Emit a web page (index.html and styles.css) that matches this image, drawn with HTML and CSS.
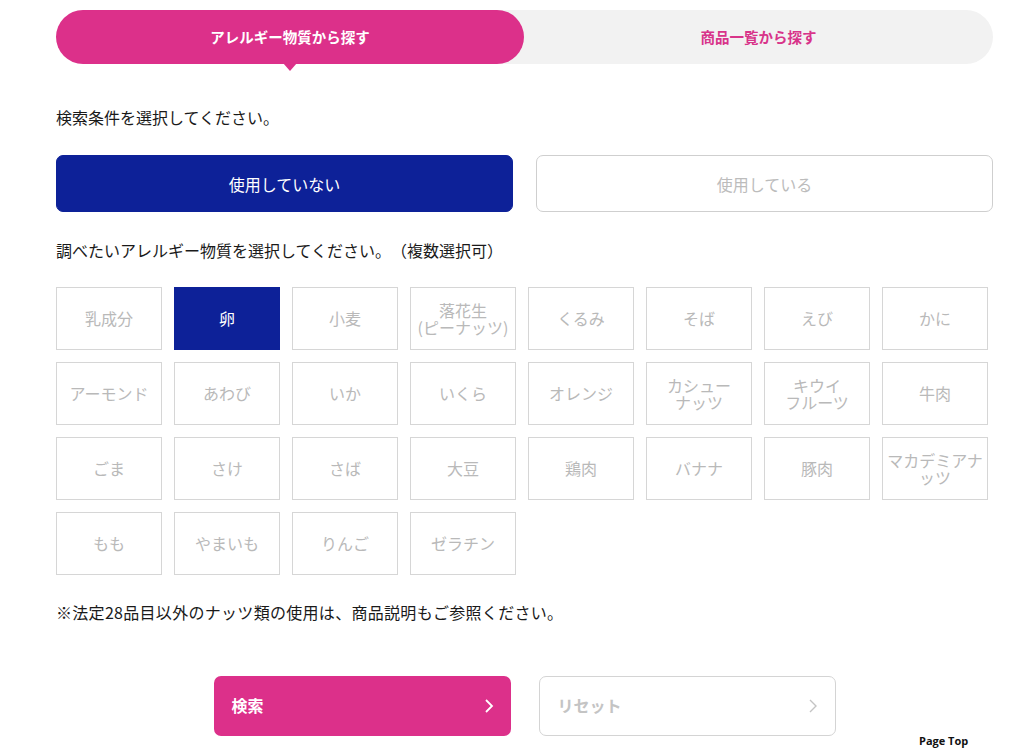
FILE: index.html
```html
<!DOCTYPE html>
<html lang="ja">
<head>
<meta charset="utf-8">
<link rel="stylesheet" href="styles.css">
</head>
<body>
<div class="page">
  <div class="tabs">
    <div class="tab tab-active">アレルギー物質から探す</div>
    <div class="tab tab-other">商品一覧から探す</div>
  </div>

  <p class="lead lead-first">検索条件を選択してください。</p>

  <div class="mode">
    <div class="mode-btn mode-on">使用していない</div>
    <div class="mode-btn mode-off">使用している</div>
  </div>

  <p class="lead lead-second">調べたいアレルギー物質を選択してください。（複数選択可）</p>

  <div class="grid">
    <div class="cell">乳成分</div>
    <div class="cell cell-on">卵</div>
    <div class="cell">小麦</div>
    <div class="cell">落花生<br>(ピーナッツ)</div>
    <div class="cell">くるみ</div>
    <div class="cell">そば</div>
    <div class="cell">えび</div>
    <div class="cell">かに</div>
    <div class="cell">アーモンド</div>
    <div class="cell">あわび</div>
    <div class="cell">いか</div>
    <div class="cell">いくら</div>
    <div class="cell">オレンジ</div>
    <div class="cell">カシュー<br>ナッツ</div>
    <div class="cell">キウイ<br>フルーツ</div>
    <div class="cell">牛肉</div>
    <div class="cell">ごま</div>
    <div class="cell">さけ</div>
    <div class="cell">さば</div>
    <div class="cell">大豆</div>
    <div class="cell">鶏肉</div>
    <div class="cell">バナナ</div>
    <div class="cell">豚肉</div>
    <div class="cell">マカデミアナッツ</div>
    <div class="cell">もも</div>
    <div class="cell">やまいも</div>
    <div class="cell">りんご</div>
    <div class="cell">ゼラチン</div>
  </div>

  <p class="note">※法定28品目以外のナッツ類の使用は、商品説明もご参照ください。</p>

  <div class="actions">
    <div class="act act-search"><span>検索</span>
      <svg class="chev" width="10" height="16" viewBox="0 0 10 16"><path d="M2 2l6 6-6 6" fill="none" stroke="currentColor" stroke-width="1.8"/></svg>
    </div>
    <div class="act act-reset"><span>リセット</span>
      <svg class="chev" width="10" height="16" viewBox="0 0 10 16"><path d="M2 2l6 6-6 6" fill="none" stroke="currentColor" stroke-width="1.4"/></svg>
    </div>
  </div>
</div>
<a class="pagetop">Page Top</a>
</body>
</html>
```

FILE: styles.css
```css
* { box-sizing: border-box; }
html, body { margin: 0; padding: 0; background: #fff; }
body {
  font-family: "Noto Sans CJK JP", "Noto Sans", sans-serif;
  color: #222;
  width: 1024px;
  height: 754px;
  overflow: hidden;
  position: relative;
  text-spacing-trim: space-all;
}
.page {
  padding: 10px 31px 0 56px;
}
.tabs {
  display: flex;
  height: 54px;
  position: relative;
}
.tab {
  display: flex;
  align-items: center;
  justify-content: center;
  font-size: 14.5px;
  font-weight: 700;
  border-radius: 27px;
  padding-bottom: 2px;
}
.tab-active {
  width: 468px;
  background: #dc308a;
  color: #fff;
  position: relative;
  z-index: 2;
}
.tab-active::after {
  content: "";
  position: absolute;
  left: 227px;
  bottom: -7px;
  border-left: 7px solid transparent;
  border-right: 7px solid transparent;
  border-top: 8px solid #dc308a;
}
.tab-other {
  flex: 1;
  margin-left: -30px;
  padding-left: 30px;
  background: #f2f2f2;
  color: #d8348a;
  border-radius: 0 27px 27px 0;
}
.lead {
  margin: 0;
  font-size: 16px;
  line-height: 22px;
  color: #1a1a1a;
}
.lead-first { margin-top: 42px; }
.lead-second { margin-top: 27px; }
.mode {
  display: flex;
  gap: 23px;
  margin-top: 27px;
}
.mode-btn {
  flex: 1;
  height: 57px;
  display: flex;
  align-items: center;
  justify-content: center;
  font-size: 16px;
  border-radius: 7px;
}
.mode-on {
  background: #0d2198;
  color: #fff;
  border: 1px solid #0d2198;
}
.mode-off {
  background: #fff;
  color: #bcbcbc;
  border: 1px solid #cfcfcf;
}
.grid {
  display: grid;
  grid-template-columns: repeat(8, 106px);
  grid-auto-rows: 63px;
  column-gap: 12px;
  row-gap: 12px;
  margin-top: 26px;
}
.cell {
  border: 1px solid #d6d6d6;
  display: flex;
  align-items: center;
  justify-content: center;
  text-align: center;
  font-size: 16px;
  line-height: 17px;
  color: #b9b9b9;
  padding: 0 1px;
}
.cell-on {
  background: #0d2198;
  border-color: #0d2198;
  color: #fff;
}
.note {
  margin: 26px 0 0;
  font-size: 16px;
  line-height: 22px;
  letter-spacing: 0.3px;
  color: #1a1a1a;
}
.actions {
  display: flex;
  justify-content: center;
  gap: 28px;
  margin-top: 53px;
}
.act {
  width: 297px;
  height: 60px;
  border-radius: 7px;
  display: flex;
  align-items: center;
  justify-content: space-between;
  padding: 0 17px 3px 18px;
  font-size: 16px;
  font-weight: 700;
}
.act .chev { margin-top: 3px; }
.act-search {
  background: #dc308a;
  color: #fff;
}
.act-reset {
  background: #fff;
  border: 1px solid #d4d4d4;
  color: #c4c4c4;
}
.chev { display: block; }
.pagetop {
  position: absolute;
  left: 919px;
  top: 733px;
  font-family: "Open Sans", "Noto Sans", sans-serif;
  font-size: 11px;
  font-weight: 700;
  color: #111;
}
```
